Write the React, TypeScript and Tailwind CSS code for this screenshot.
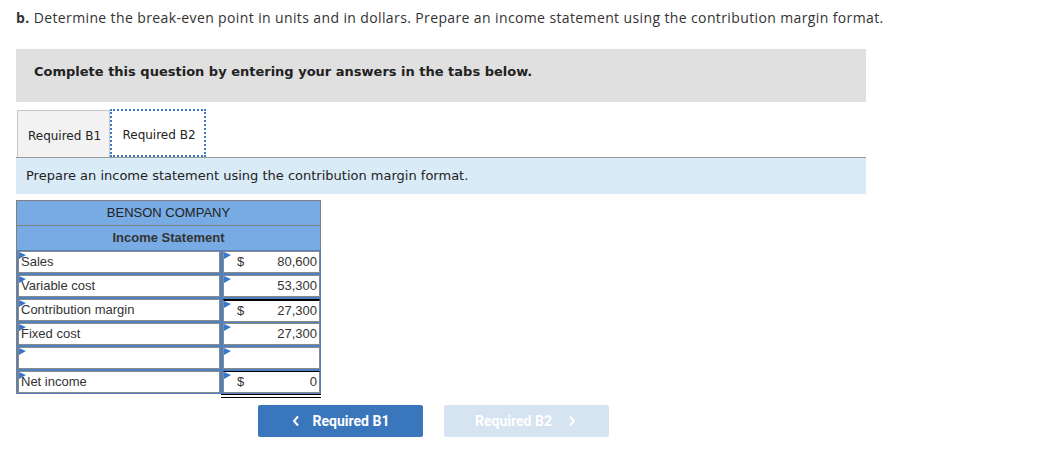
import React from "react";

type Row = {
  label: string;
  dollar?: boolean;
  value?: string;
  topLine?: "single" | "thick";
};

const rows: Row[] = [
  { label: "Sales", dollar: true, value: "80,600" },
  { label: "Variable cost", value: "53,300" },
  { label: "Contribution margin", dollar: true, value: "27,300", topLine: "thick" },
  { label: "Fixed cost", value: "27,300" },
  { label: "" },
  { label: "Net income", dollar: true, value: "0", topLine: "single" },
];

function Flag() {
  return (
    <svg
      className="absolute left-0 top-0"
      width="7"
      height="7"
      viewBox="0 0 7 7"
    >
      <polygon points="0,0 7,3 0,7" fill="#3a78cc" />
    </svg>
  );
}

function StatementRow({ row }: { row: Row }) {
  return (
    <div className="flex h-[24px] bg-[#4f80bf] py-[1px] pl-[1px]">
      <div className="relative flex w-[202px] items-center border border-[#8a8a8a] bg-white pl-[2px] text-[13px] text-[#333]">
        <Flag />
        {row.label}
      </div>
      <div className="ml-[3px] flex w-[97px] flex-col">
        <div
          className={
            "relative flex flex-1 items-center justify-between border border-[#8a8a8a] bg-white pl-[13px] pr-[2px] text-[13px] text-[#333] " +
            (row.topLine === "thick"
              ? "border-t-2 border-t-black"
              : row.topLine === "single"
                ? "border-t-black"
                : "")
          }
        >
          <Flag />
          <span>{row.dollar ? "$" : ""}</span>
          <span>{row.value}</span>
        </div>
      </div>
    </div>
  );
}

export default function App() {
  return (
    <div className="min-h-[449px] w-[1058px] bg-white font-['Open_Sans',sans-serif] text-[#333]">
      <div className="px-4 pt-[9px]">
        <p className="text-[14px] leading-[18px] tracking-[0.38px]">
          <b>b.</b> Determine the break-even point in units and in dollars.
          Prepare an income statement using the contribution margin format.
        </p>

        <div className="mt-[22px] flex h-[53px] w-[850px] items-center bg-[#e0e0e0] pb-[8px] pl-[18px] font-['DejaVu_Sans',sans-serif] text-[13px] font-bold text-[#222]">
          Complete this question by entering your answers in the tabs below.
        </div>

        <div className="mt-[8px] w-[850px] font-['DejaVu_Sans',sans-serif] text-[12px] text-[#222]">
          <div className="flex h-[47px] items-end pl-[1px]">
            <div className="flex h-[47px] w-[93px] items-center justify-center border border-b-0 border-[#c6c6c6] bg-[#f2f2f2] pl-[2px] pt-[3px]">
              Required B1
            </div>
            <div className="flex h-[48px] w-[96px] items-center justify-center border-2 border-dotted border-[#3b78c5] bg-white pl-[2px] pt-[3px]">
              Required B2
            </div>
          </div>
          <div className="h-px bg-[#9a9a9a]" />
          <div className="flex h-[36px] items-center bg-[#daebf8] pl-[10px] text-[13px]">
            Prepare an income statement using the contribution margin format.
          </div>
        </div>

        <div className="mt-[6px] w-[305px] font-['Liberation_Sans',Arial,sans-serif]">
          <div className="border border-b-0 border-[#808080] bg-[#78abe3] text-[#222]">
            <div className="flex h-[24px] items-center justify-center text-[13px]">
              BENSON COMPANY
            </div>
            <div className="flex h-[25px] items-center justify-center border-t border-[#808080] text-[13px] font-bold text-[#333]">
              Income Statement
            </div>
          </div>
          <div className="border-l border-[#808080]">
            {rows.map((r, i) => (
              <StatementRow key={i} row={r} />
            ))}
          </div>
          <div className="ml-[205px] flex w-[100px] flex-col gap-[2px]">
            <div className="h-px bg-black" />
            <div className="h-px bg-black" />
          </div>
        </div>

        <div className="mt-[7px] flex gap-[21px] pl-[242px] font-['Roboto',sans-serif] text-[14px] font-bold text-white">
          <button className="flex h-[32px] w-[165px] items-center justify-center gap-[13px] rounded-[2px] bg-[#3a76bb]">
            <svg width="8" height="12" viewBox="0 0 8 12">
              <path d="M6 1.5 L2 6 L6 10.5" fill="none" stroke="white" strokeWidth="2" />
            </svg>
            Required B1
          </button>
          <button className="flex h-[32px] w-[165px] items-center justify-center gap-[16px] rounded-[2px] bg-[#d6e3f1] pr-[2px]">
            Required B2
            <svg width="8" height="12" viewBox="0 0 8 12">
              <path d="M2 1.5 L6 6 L2 10.5" fill="none" stroke="white" strokeWidth="2" />
            </svg>
          </button>
        </div>
      </div>
    </div>
  );
}
